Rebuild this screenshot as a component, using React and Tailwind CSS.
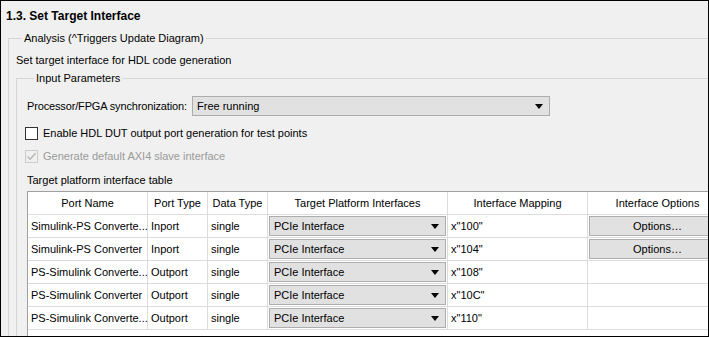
import React from "react";

const rows = [
  { name: "Simulink-PS Converte...", type: "Inport", map: 'x"100"', options: true },
  { name: "Simulink-PS Converter", type: "Inport", map: 'x"104"', options: true },
  { name: "PS-Simulink Converte...", type: "Outport", map: 'x"108"', options: false },
  { name: "PS-Simulink Converter", type: "Outport", map: 'x"10C"', options: false },
  { name: "PS-Simulink Converte...", type: "Outport", map: 'x"110"', options: false },
];

const Arrow = () => (
  <svg width="8" height="5" viewBox="0 0 8 5" className="shrink-0">
    <path d="M0 0 H8 L4 5 Z" fill="#000" />
  </svg>
);

const cell = "h-[23px] border-r border-b border-[#dcdcdc] bg-white flex items-center";

const App = () => {
  return (
    <div className="w-[709px] h-[337px] overflow-hidden border border-black bg-[#f0f0f0] font-['Liberation_Sans',sans-serif] text-[11px] leading-[16px] text-black">
      <div className="pl-[5px] pt-[7px] mb-[6px] font-bold text-[12px]">1.3. Set Target Interface</div>

      <fieldset className="ml-[7px] -mr-[40px] border border-[#d5d5d5] pl-[7px] pb-[40px]">
        <legend className="ml-[6px] px-[2px]">Analysis (^Triggers Update Diagram)</legend>
        <div className="mt-[6px]">Set target interface for HDL code generation</div>

        <fieldset className="mt-[2px] border border-[#d5d5d5] pl-[10px] pb-[40px]">
          <legend className="ml-[7px] px-[2px]">Input Parameters</legend>

          <div className="mt-[10px] flex items-center">
            <span className="w-[165px] shrink-0 whitespace-nowrap tracking-[-0.15px]">Processor/FPGA synchronization:</span>
            <div className="w-[358px] h-[20px] bg-[#e1e1e1] border border-[#adadad] flex items-center justify-between pl-[4px] pr-[6px]">
              <span>Free running</span>
              <Arrow />
            </div>
          </div>

          <label className="mt-[9px] -ml-[2px] flex items-center gap-[5px]">
            <span className="w-[13px] h-[13px] border border-[#333] bg-white shrink-0" />
            <span>Enable HDL DUT output port generation for test points</span>
          </label>

          <label className="mt-[7px] -ml-[2px] flex items-center gap-[5px] text-[#9a9a9a]">
            <span className="w-[13px] h-[13px] border border-[#cccccc] shrink-0 flex items-center justify-center">
              <svg width="11" height="11" viewBox="0 0 11 11">
                <path d="M1.5 5.5 L4.2 8.3 L9.5 2.2" fill="none" stroke="#b5b5b5" strokeWidth="1.3" />
              </svg>
            </span>
            <span>Generate default AXI4 slave interface</span>
          </label>

          <div className="mt-[8px]">Target platform interface table</div>

          <div className="mt-[3px] w-max border-l border-t border-[#a0a0a0] bg-white">
            <div className="grid grid-cols-[120px_60px_60px_180px_140px_140px]">
              <div className={`${cell} justify-center`}>Port Name</div>
              <div className={`${cell} justify-center`}>Port Type</div>
              <div className={`${cell} justify-center`}>Data Type</div>
              <div className={`${cell} justify-center`}>Target Platform Interfaces</div>
              <div className={`${cell} justify-center`}>Interface Mapping</div>
              <div className={`${cell} justify-center`}>Interface Options</div>

              {rows.map((r, i) => (
                <React.Fragment key={i}>
                  <div className={`${cell} pl-[3px] whitespace-nowrap`}>{r.name}</div>
                  <div className={`${cell} pl-[3px]`}>{r.type}</div>
                  <div className={`${cell} pl-[3px]`}>single</div>
                  <div className={`${cell} p-[1px]`}>
                    <div className="w-full h-full bg-[#e1e1e1] border border-[#adadad] flex items-center justify-between pl-[4px] pr-[6px]">
                      <span>PCIe Interface</span>
                      <Arrow />
                    </div>
                  </div>
                  <div className={`${cell} pl-[3px]`}>{r.map}</div>
                  <div className={`${cell} p-[1px]`}>
                    {r.options && (
                      <div className="w-full h-full bg-[#e1e1e1] border border-[#adadad] flex items-center justify-center">
                        Options…
                      </div>
                    )}
                  </div>
                </React.Fragment>
              ))}
            </div>
            <div className="h-[30px] bg-white" />
          </div>
        </fieldset>
      </fieldset>
    </div>
  );
};

export default App;
